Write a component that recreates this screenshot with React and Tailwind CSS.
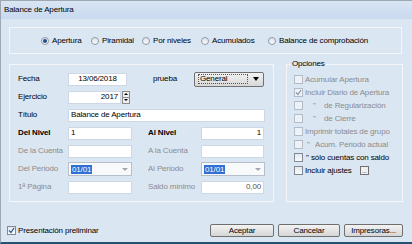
import React from 'react';

function Radio({ checked, label, w }) {
  return (
    <div className={`flex items-center gap-[3px] shrink-0 ${w}`}>
      <span className="w-[8px] h-[8px] rounded-full border border-[#8e9aa8] bg-gradient-to-b from-[#dfe4ea] to-[#f8f9fb] flex items-center justify-center">
        {checked && <span className="w-[4px] h-[4px] rounded-full bg-[#1f4f8f]" />}
      </span>
      <span>{label}</span>
    </div>
  );
}

// indent: "wide" (de Regularización / de Cierre), "mid" (Acum.), "tight" (sólo cuentas)
function Check({ checked, disabled, label, indent, children }) {
  const quote =
    indent === "wide" ? "ml-[10px] w-[11px]" :
    indent === "mid" ? "ml-[4px] w-[8px]" : "ml-[3px] w-[5px]";
  return (
    <div className="h-[13px] flex items-center">
      <span className={`w-[9px] h-[9px] border shrink-0 flex items-center justify-center ${disabled ? "border-[#b3bdc9] bg-[#eef1f5]" : "border-[#7f8a96] bg-gradient-to-b from-[#e4e7eb] to-[#fbfbfc]"}`}>
        {checked && (
          <svg width="7" height="7" viewBox="0 0 7 7">
            <path d="M1 3.5 L3 5.5 L6 1" fill="none" stroke={disabled ? "#8f99a5" : "#2a5aa8"} strokeWidth="1.3" />
          </svg>
        )}
      </span>
      {indent ? (
        <span className={`flex ${disabled ? "text-[#8c8c8c]" : "text-black"}`}>
          <span className={quote}>"</span>
          <span>{label}</span>
        </span>
      ) : (
        <span className={`ml-[2px] ${disabled ? "text-[#8c8c8c]" : "text-black"}`}>{label}</span>
      )}
      {children}
    </div>
  );
}

function Row({ label, bold, disabled, children }) {
  return (
    <div className="h-[18px] flex items-center">
      <span className={`w-[50px] shrink-0 ${bold ? "font-bold" : ""} ${disabled ? "text-[#8c8c8c]" : ""}`}>{label}</span>
      {children}
    </div>
  );
}

const box = "h-[13px] bg-white border border-[#cdd8e4] flex items-center px-[2px]";

function PeriodSelect() {
  return (
    <div className="w-[64px] h-[14px] bg-[#f7f9fb] border border-[#b6c0cb] flex items-center pl-[2px] pr-[3px]">
      <span className="bg-[#2f6fd6] text-white px-[1px] leading-[9px]">01/01</span>
      <span className="ml-auto w-0 h-0 border-l-[3px] border-r-[3px] border-t-[3px] border-l-transparent border-r-transparent border-t-[#a0a7b0]" />
    </div>
  );
}

export default function App() {
  return (
    <div className="w-[412px] h-[244px] bg-[#dbe6f3] flex flex-col text-[8px] text-black font-['Liberation_Sans',Arial,sans-serif] tracking-[-0.15px] whitespace-nowrap border-t border-l border-[#9ea8b4] border-b-2 border-b-[#26516f] overflow-hidden leading-none">
      <div className="h-[18px] shrink-0 flex items-center px-[3px] bg-gradient-to-b from-[#d9e5f3] to-[#c8daef]">
        Balance de Apertura
      </div>

      <div className="px-[8px] pt-[8px] flex flex-col">
        <div className="w-[393px] h-[27px] border border-[#f3f7fb] flex items-center pl-[31px]">
          <Radio checked label="Apertura" w="w-[50px]" />
          <Radio label="Piramidal" w="w-[51px]" />
          <Radio label="Por niveles" w="w-[59px]" />
          <Radio label="Acumulados" w="w-[67px]" />
          <Radio label="Balance de comprobación" w="" />
        </div>

        <div className="flex gap-[12px] mt-[10px]">
          <div className="w-[265px] h-[138px] border border-[#f3f7fb] pl-[8px] pt-[5px]">
            <Row label="Fecha">
              <div className={`${box} w-[59px] justify-center`}>13/06/2018</div>
              <span className="ml-[26px] w-[41px]">prueba</span>
              <div className="w-[70px] h-[15px] border border-[#707070] rounded-[2px] bg-gradient-to-b from-[#f2f2f2] to-[#d8d8d8] flex items-center pl-[3px] pr-[4px]">
                <span className="border border-dotted border-[#555] px-[1px] w-[50px] leading-[8px]">General</span>
                <span className="ml-auto w-0 h-0 border-l-[3px] border-r-[3px] border-t-[4px] border-l-transparent border-r-transparent border-t-black" />
              </div>
            </Row>
            <Row label="Ejercicio">
              <div className={`${box} w-[53px] justify-end`}>2017</div>
              <div className="flex flex-col w-[8px] h-[13px] ml-[1px]">
                <span className="flex-1 border border-[#8a8a8a] bg-[#eeeeee] flex items-center justify-center">
                  <span className="w-0 h-0 border-l-[2px] border-r-[2px] border-b-[2px] border-l-transparent border-r-transparent border-b-black" />
                </span>
                <span className="flex-1 border border-t-0 border-[#8a8a8a] bg-[#eeeeee] flex items-center justify-center">
                  <span className="w-0 h-0 border-l-[2px] border-r-[2px] border-t-[2px] border-l-transparent border-r-transparent border-t-black" />
                </span>
              </div>
            </Row>
            <Row label="Título">
              <div className={`${box} w-[197px]`}>Balance de Apertura</div>
            </Row>
            <Row label="Del Nivel" bold>
              <div className={`${box} w-[64px]`}>1</div>
              <span className="ml-[16px] w-[53px] font-bold">Al Nivel</span>
              <div className={`${box} w-[63px] justify-end`}>1</div>
            </Row>
            <Row label="De la Cuenta" disabled>
              <div className={`${box} w-[64px]`} />
              <span className="ml-[16px] w-[53px] text-[#8c8c8c]">A la Cuenta</span>
              <div className={`${box} w-[63px]`} />
            </Row>
            <Row label="Del Periodo" disabled>
              <PeriodSelect />
              <span className="ml-[16px] w-[53px] text-[#8c8c8c]">Al Periodo</span>
              <PeriodSelect />
            </Row>
            <Row label="1ª Página" disabled>
              <div className={`${box} w-[64px]`} />
              <span className="ml-[16px] w-[53px] text-[#8c8c8c]">Saldo mínimo</span>
              <div className={`${box} w-[63px] justify-end text-[#555]`}>0,00</div>
            </Row>
          </div>

          <div className="w-[117px] h-[138px] border border-[#f3f7fb] relative pl-[7px] pt-[8px]">
            <span className="absolute -top-[5px] left-[4px] px-[1px] bg-[#dbe6f3]">Opciones</span>
            <Check disabled label="Acumular Apertura" />
            <Check disabled checked label="Incluir Diario de Apertura" />
            <Check disabled indent="wide" label="de Regularización" />
            <Check disabled indent="wide" label="de Cierre" />
            <Check disabled label="Imprimir totales de grupo" />
            <Check disabled indent="mid" label="Acum. Periodo actual" />
            <Check indent="tight" label="sólo cuentas con saldo" />
            <Check label="Incluir ajustes">
              <span className="ml-[8px] w-[9px] h-[9px] border border-[#707070] bg-[#f0f0f0] flex items-end justify-center text-[6px] leading-[5px]">...</span>
            </Check>
          </div>
        </div>
      </div>

      <div className="mt-auto mb-[5px] flex items-center pl-[6px] pr-[9px]">
        <Check checked label="Presentación preliminar" />
        <div className="ml-auto flex gap-[4px]">
          <button className="w-[64px] h-[13px] border border-[#707070] rounded-[2px] bg-gradient-to-b from-[#f3f3f3] to-[#d6d6d6] text-[8px] leading-none">Aceptar</button>
          <button className="w-[62px] h-[13px] border border-[#707070] rounded-[2px] bg-gradient-to-b from-[#f3f3f3] to-[#d6d6d6] text-[8px] leading-none">Cancelar</button>
          <button className="w-[59px] h-[13px] border border-[#707070] rounded-[2px] bg-gradient-to-b from-[#f3f3f3] to-[#d6d6d6] text-[8px] leading-none">Impresoras...</button>
        </div>
      </div>
    </div>
  );
}
